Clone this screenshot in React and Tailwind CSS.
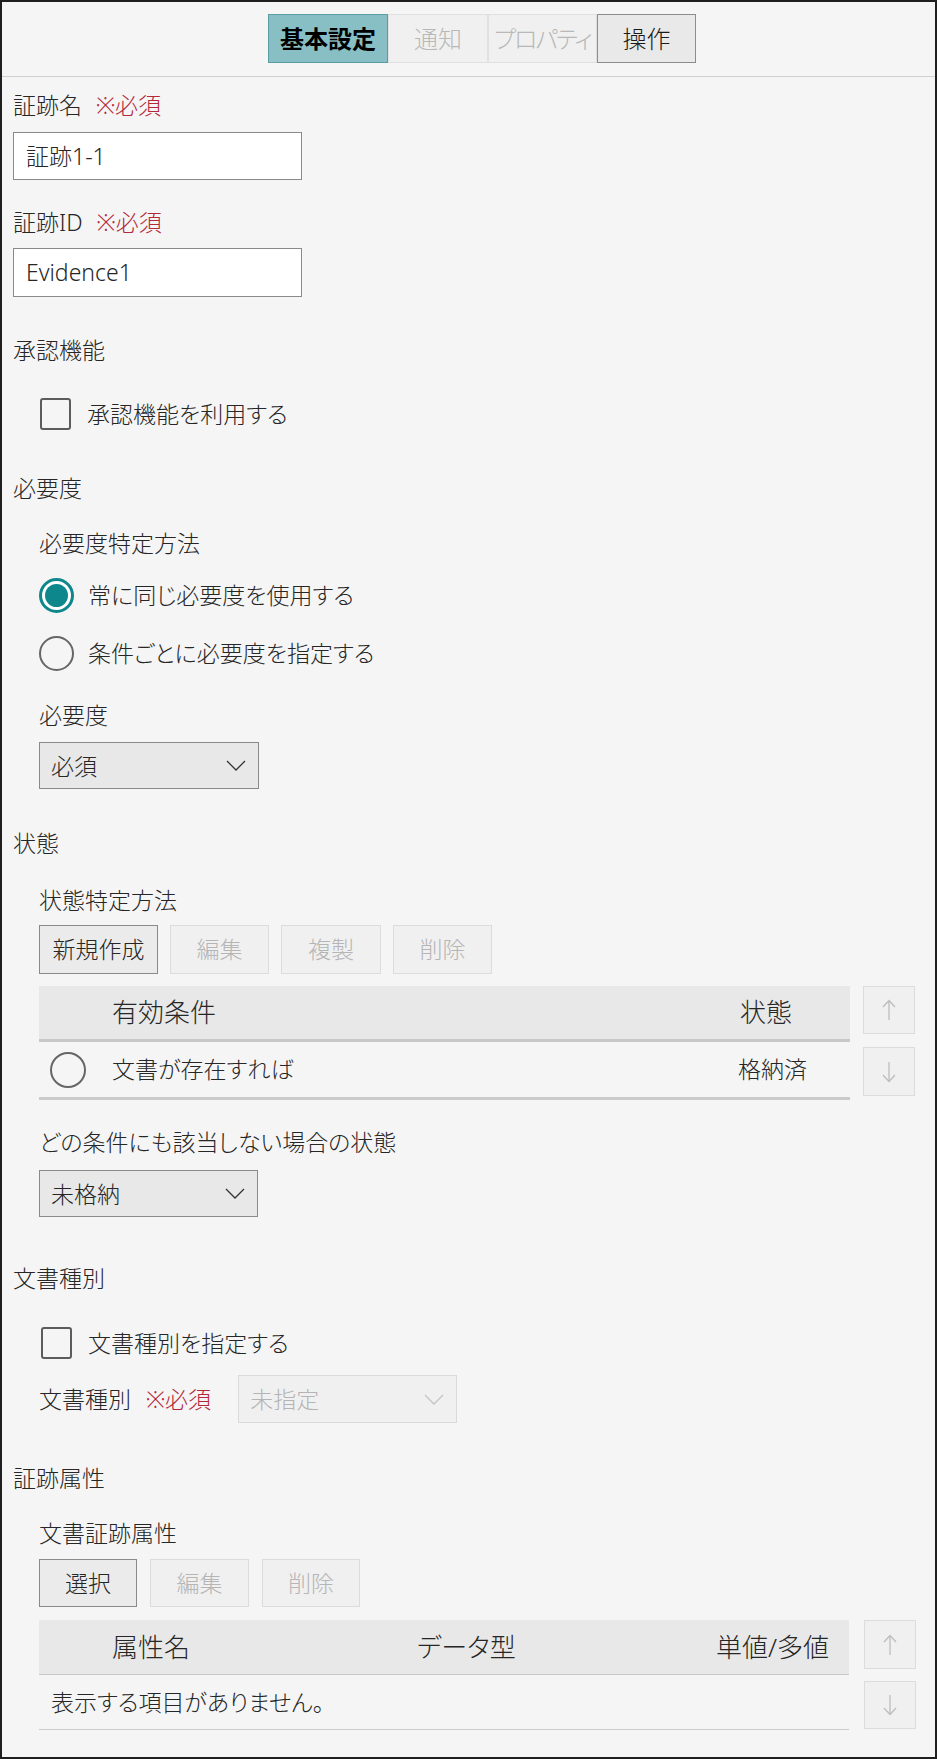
import React from "react";

// 共通スタイル
const Label = ({ children, className = "" }) => (
  <div className={`leading-[32px] h-[32px] whitespace-nowrap ${className}`}>{children}</div>
);

const Required = ({ className = "" }) => (
  <span className={`text-[#b3283a] ${className}`}>※必須</span>
);

const Chevron = ({ color = "#333" }) => (
  <svg width="20" height="11" viewBox="0 0 20 11">
    <polyline points="1,1 10,10 19,1" fill="none" stroke={color} strokeWidth="1.3" />
  </svg>
);

const Dropdown = ({ value, width, height = 47, disabled }) => (
  <div
    className={`flex items-center justify-between pl-[11px] pr-[12px] border ${
      disabled ? "bg-[#f0f0f0] border-[#dadada] text-[#b4b4b4]" : "bg-[#e8e8e8] border-[#8a8a8a]"
    }`}
    style={{ width, height }}
  >
    <span className="leading-[32px]">{value}</span>
    <Chevron color={disabled ? "#c4c4c4" : "#333"} />
  </div>
);

const Button = ({ label, width, disabled }) => (
  <div
    className={`h-full flex items-center justify-center border ${
      disabled ? "bg-[#f0f0f0] border-[#dcdcdc] text-[#b5b5b5]" : "bg-[#ebebeb] border-[#8a8a8a]"
    }`}
    style={{ width }}
  >
    {label}
  </div>
);

const Checkbox = () => (
  <div className="w-[31px] h-[32px] border-2 border-[#5c5c5c] rounded-[3px]" />
);

const Radio = ({ checked, size = 35 }) =>
  checked ? (
    <div
      className="rounded-full border-[3px] border-[#0e878c] bg-white flex items-center justify-center shrink-0"
      style={{ width: size, height: size }}
    >
      <div className="w-[23px] h-[23px] rounded-full bg-[#0e878c]" />
    </div>
  ) : (
    <div
      className="rounded-full border-2 border-[#666] shrink-0"
      style={{ width: size, height: size }}
    />
  );

const ArrowButton = ({ down, height, className = "" }) => (
  <div
    className={`w-[52px] flex items-center justify-center bg-[#f0f0f0] border border-[#dcdcdc] ${className}`}
    style={{ height }}
  >
    <svg width="16" height="22" viewBox="0 0 16 22">
      {down ? (
        <g fill="none" stroke="#bdbdbd" strokeWidth="1.3">
          <line x1="8" y1="1" x2="8" y2="20" />
          <polyline points="2,14 8,20.5 14,14" />
        </g>
      ) : (
        <g fill="none" stroke="#bdbdbd" strokeWidth="1.3">
          <line x1="8" y1="2" x2="8" y2="21" />
          <polyline points="2,8 8,1.5 14,8" />
        </g>
      )}
    </svg>
  </div>
);

const tabs = [
  { label: "基本設定", width: 120, cls: "bg-[#87bfc4] border-[#5a9ea3] font-bold text-black" },
  { label: "通知", width: 100, cls: "bg-[#f0f0f0] border-[#e0e0e0] text-[#b8b8b8]" },
  { label: "プロパティ", width: 109, cls: "bg-[#f0f0f0] border-[#e0e0e0] text-[#b8b8b8] tracking-[-2px]" },
  { label: "操作", width: 99, cls: "bg-[#e9e9e9] border-[#8c8c8c] text-[#1a1a1a]" },
];

export default function App() {
  return (
    <div className="w-[937px] h-[1759px] overflow-hidden bg-[#f5f5f5] border-2 border-[#1f1f1f] text-[23px] font-light text-[#262626] font-['Noto_Sans','Noto_Sans_CJK_JP',sans-serif] [font-feature-settings:'palt']">
      {/* タブ */}
      <div className="h-[75px] border-b border-[#d0d0d0] flex justify-center pl-[27px] pt-[12px]">
        <div className="flex h-[49px] text-[24px]">
          {tabs.map((t) => (
            <div
              key={t.label}
              className={`flex items-center justify-center border whitespace-nowrap ${t.cls}`}
              style={{ width: t.width }}
            >
              {t.label}
            </div>
          ))}
        </div>
      </div>

      <div className="pl-[11px] pt-[12px]">
        {/* 証跡名 */}
        <Label>
          証跡名<Required className="ml-[14px]" />
        </Label>
        <div className="mt-[11px] w-[289px] h-[48px] border border-[#8a8a8a] bg-white pl-[12px] flex items-center">
          証跡1-1
        </div>

        <Label className="mt-[26px]">
          証跡ID<Required className="ml-[14px]" />
        </Label>
        <div className="mt-[10px] w-[289px] h-[49px] border border-[#8a8a8a] bg-white pl-[12px] flex items-center">
          Evidence1
        </div>

        {/* 承認機能 */}
        <Label className="mt-[37px]">承認機能</Label>
        <div className="mt-[32px] ml-[27px] h-[32px] flex items-center gap-[16px]">
          <Checkbox />
          <span>承認機能を利用する</span>
        </div>

        {/* 必要度 */}
        <Label className="mt-[42px]">必要度</Label>
        <div className="ml-[26px]">
          <Label className="mt-[23px]">必要度特定方法</Label>
          <div className="mt-[18px] h-[36px] flex items-center gap-[14px]">
            <Radio checked />
            <span>常に同じ必要度を使用する</span>
          </div>
          <div className="mt-[22px] h-[36px] flex items-center gap-[14px]">
            <Radio />
            <span>条件ごとに必要度を指定する</span>
          </div>
          <Label className="mt-[28px]">必要度</Label>
          <div className="mt-[11px]">
            <Dropdown value="必須" width={220} />
          </div>
        </div>

        {/* 状態 */}
        <Label className="mt-[38px]">状態</Label>
        <div className="ml-[26px]">
          <Label className="mt-[25px]">状態特定方法</Label>
          <div className="mt-[9px] h-[49px] flex gap-[12px]">
            <Button label="新規作成" width={119} />
            <Button label="編集" width={99} disabled />
            <Button label="複製" width={100} disabled />
            <Button label="削除" width={99} disabled />
          </div>
          <div className="mt-[12px] flex gap-[13px]">
            <div className="w-[811px]">
              <div className="h-[56px] bg-[#e8e8e8] border-b-[3px] border-[#c8c8c8] flex items-center text-[26px]">
                <div className="flex-1 pl-[73px]">有効条件</div>
                <div className="w-[110px]">状態</div>
              </div>
              <div className="h-[58px] border-b-[3px] border-[#cbcbcb] flex items-center">
                <div className="pl-[11px]">
                  <Radio size={36} />
                </div>
                <div className="flex-1 pl-[26px]">文書が存在すれば</div>
                <div className="w-[112px]">格納済</div>
              </div>
            </div>
            <div>
              <ArrowButton height={48} />
              <ArrowButton down height={49} className="mt-[13px]" />
            </div>
          </div>
          <Label className="mt-[26px]">どの条件にも該当しない場合の状態</Label>
          <div className="mt-[12px]">
            <Dropdown value="未格納" width={219} />
          </div>
        </div>

        {/* 文書種別 */}
        <Label className="mt-[45px]">文書種別</Label>
        <div className="ml-[26px]">
          <div className="mt-[33px] ml-[2px] h-[32px] flex items-center gap-[16px]">
            <Checkbox />
            <span>文書種別を指定する</span>
          </div>
          <div className="mt-[16px] h-[48px] flex items-center">
            <span className="leading-[32px]">文書種別</span>
            <Required className="ml-[15px] leading-[32px]" />
            <div className="ml-[27px]">
              <Dropdown value="未指定" width={219} height={48} disabled />
            </div>
          </div>
        </div>

        {/* 証跡属性 */}
        <Label className="mt-[39px]">証跡属性</Label>
        <div className="ml-[26px]">
          <Label className="mt-[23px]">文書証跡属性</Label>
          <div className="mt-[10px] h-[48px] flex gap-[13px]">
            <Button label="選択" width={98} />
            <Button label="編集" width={99} disabled />
            <Button label="削除" width={98} disabled />
          </div>
          <div className="mt-[13px] flex gap-[15px]">
            <div className="w-[810px]">
              <div className="h-[55px] bg-[#e8e8e8] border-b border-[#c8c8c8] flex items-center text-[26px]">
                <div className="w-[378px] pl-[73px]">属性名</div>
                <div className="flex-1">データ型</div>
                <div className="pr-[20px]">単値/多値</div>
              </div>
              <div className="h-[55px] border-b border-[#cbcbcb] flex items-center pl-[12px]">
                表示する項目がありません。
              </div>
            </div>
            <div>
              <ArrowButton height={49} />
              <ArrowButton down height={48} className="mt-[12px]" />
            </div>
          </div>
        </div>
      </div>
    </div>
  );
}
